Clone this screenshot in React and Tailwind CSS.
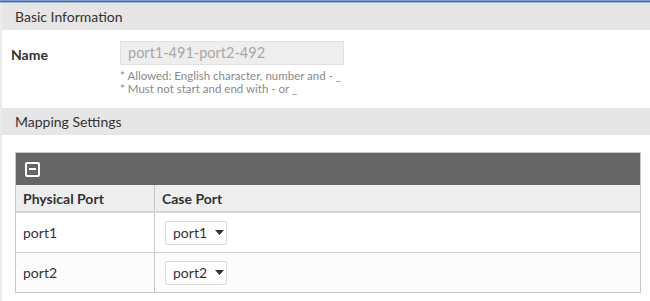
import React from "react";

function Caret() {
  return (
    <svg width="9" height="5" viewBox="0 0 9 5" className="ml-[8px]">
      <path d="M0 0 L9 0 L4.5 5 Z" fill="#333" />
    </svg>
  );
}

function Select({ value }) {
  return (
    <div className="flex items-center h-[24px] w-[62px] border border-[#dcdcdc] bg-white rounded-[2px] pl-[7px] text-[14px] text-[#333]">
      <span>{value}</span>
      <Caret />
    </div>
  );
}

export default function App() {
  return (
    <div className="w-[650px] h-[301px] bg-white overflow-hidden" style={{ fontFamily: "Lato, 'Open Sans', sans-serif" }}>
      <div className="h-[3px] flex flex-col">
        <div className="h-px bg-[#7fa0cc]" />
        <div className="h-px bg-[#3a68a4]" />
        <div className="h-px bg-[#9fb8da]" />
      </div>
      <div className="border-l-2 border-[#ebebeb] h-[298px]">
        <div className="h-[27px] bg-[#e6e6e6] flex items-center pl-[13px] text-[14px] text-[#333]">
          Basic Information
        </div>
        <div className="flex pt-[11px] h-[78px]">
          <div className="w-[118px] pl-[9px] pt-[3px] text-[14px] font-bold text-[#333]">Name</div>
          <div className="flex flex-col">
            <div className="w-[224px] h-[24px] bg-[#eeeeee] border border-[#e2e2e2] flex items-center pl-[7px] text-[14.5px] text-[#a8a8a8]">
              port1-491-port2-492
            </div>
            <div className="mt-[4px] text-[11.5px] leading-[13px] text-[#8a8a8a]">* Allowed: English character, number and - _</div>
            <div className="text-[11.5px] leading-[13px] text-[#8a8a8a]">* Must not start and end with - or _</div>
          </div>
        </div>
        <div className="h-[27px] bg-[#e6e6e6] flex items-center pl-[13px] text-[14px] text-[#333]">
          Mapping Settings
        </div>
        <div className="pt-[17px] pl-[13px] pr-[9px]">
          <div className="border border-[#c8c8c8]">
            <div className="h-[32px] bg-[#666666] flex items-center pl-[9px]">
              <div className="w-[15px] h-[15px] border-2 border-white rounded-[2px] flex items-center justify-center">
                <div className="w-[7px] h-[2px] bg-white" />
              </div>
            </div>
            <div className="flex h-[28px] bg-[#eeeeee] border-b-2 border-[#d6d6d6] text-[14px] font-bold text-[#333]">
              <div className="w-[139px] border-r border-[#c8c8c8] flex items-center pl-[7px]">Physical Port</div>
              <div className="flex-1 flex items-center pl-[7px]">Case Port</div>
            </div>
            <div className="flex h-[40px] bg-white border-b border-[#d0d0d0] text-[14px] text-[#333]">
              <div className="w-[139px] border-r border-[#c8c8c8] flex items-center pl-[7px]">port1</div>
              <div className="flex-1 flex items-center pl-[10px]"><Select value="port1" /></div>
            </div>
            <div className="flex h-[39px] bg-[#fcfcfc] text-[14px] text-[#333]">
              <div className="w-[139px] border-r border-[#c8c8c8] flex items-center pl-[7px]">port2</div>
              <div className="flex-1 flex items-center pl-[10px]"><Select value="port2" /></div>
            </div>
          </div>
        </div>
      </div>
    </div>
  );
}
